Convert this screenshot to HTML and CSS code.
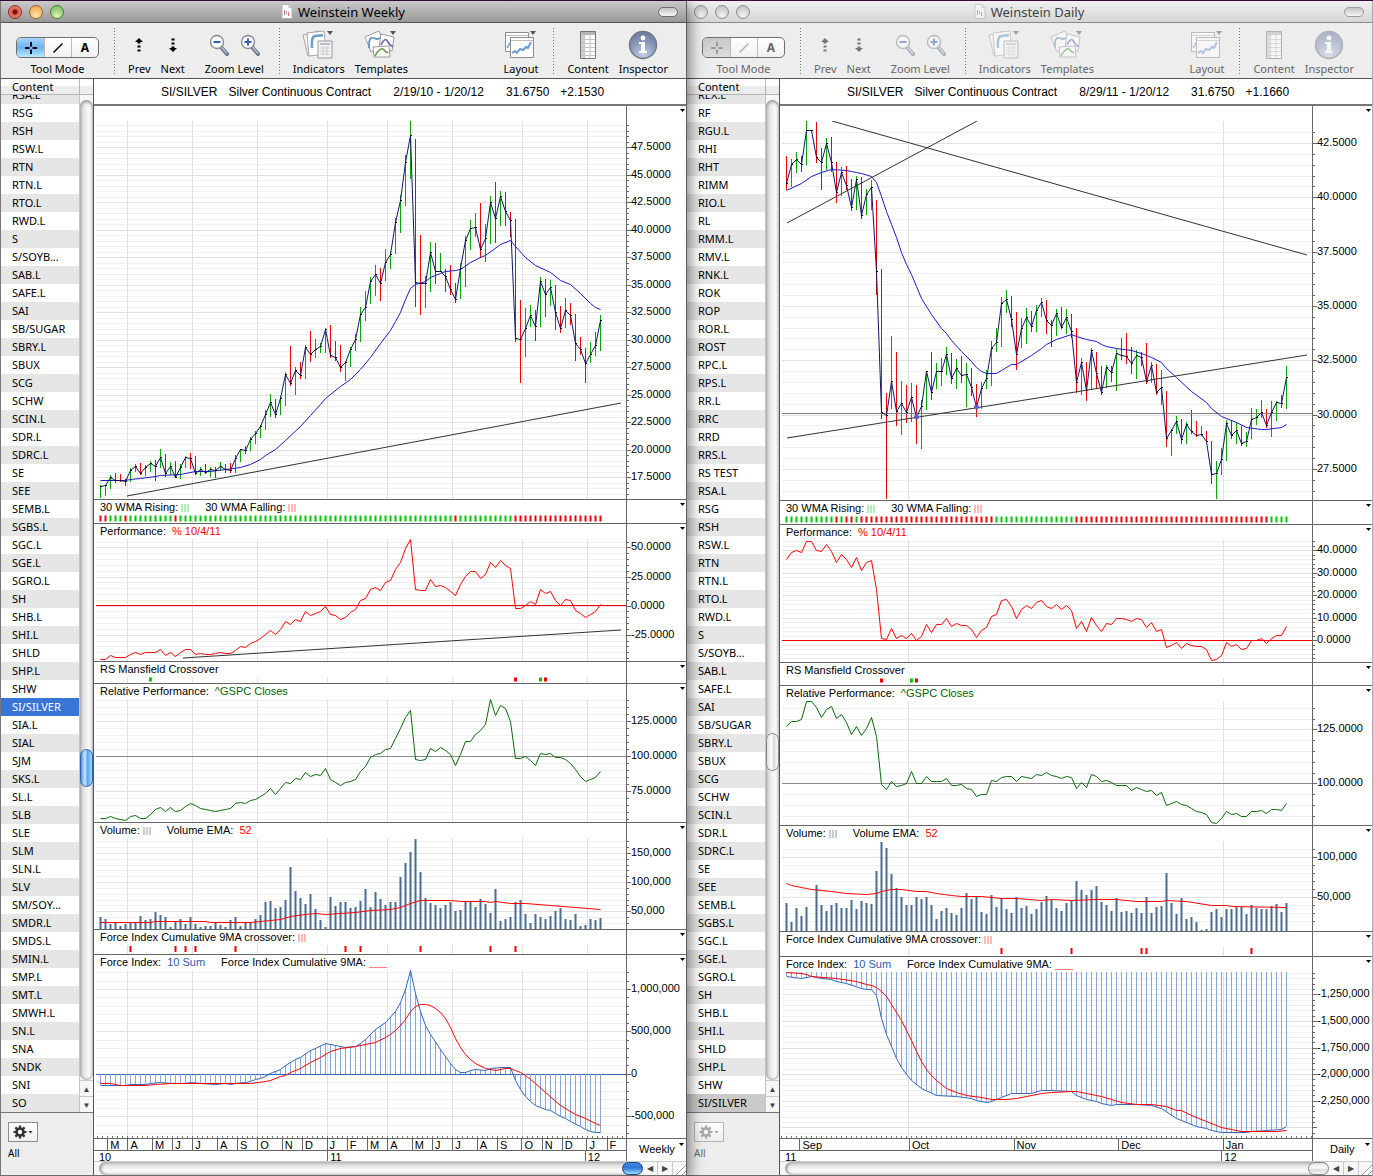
FILE: index.html
```html
<!DOCTYPE html>
<html lang="en">
<head>
  <meta charset="UTF-8">
  <title>Weinstein Charts</title>
  <meta name="viewport" content="width=device-width, initial-scale=1.0"/>
  <link rel="stylesheet" href="styles.css">
</head>
<body>
  <!-- shared icons -->
  <svg class="defs" aria-hidden="true">
    <defs>
      <radialGradient id="info-fill" cx="50%" cy="85%" r="85%">
        <stop offset="0" stop-color="#c3cfe6"/>
        <stop offset="0.6" stop-color="#8796b8"/>
        <stop offset="1" stop-color="#6a789c"/>
      </radialGradient>
    </defs>
    <symbol id="i-doc" viewBox="0 0 12 15">
      <path d="M1 .5h7l3 3v11H1z" fill="#fff" stroke="#b5b5b5"/>
      <path d="M8 .5v3h3" fill="#e4e4e4" stroke="#b5b5b5"/>
      <path d="M3.5 6v5M7.5 8v4" stroke="#e06a7c" stroke-width="1"/>
      <path d="M5.5 7v3" stroke="#8aa3d8"/>
    </symbol>
    <symbol id="i-cross" viewBox="0 0 12 12">
      <path d="M6 0v4.5M6 7.5V12M0 6h4.5M7.5 6H12" stroke="currentColor" stroke-width="2"/>
    </symbol>
    <symbol id="i-line" viewBox="0 0 12 12">
      <path d="M1.5 10.5l9-9" stroke="currentColor" stroke-width="1.5"/>
    </symbol>
    <symbol id="i-prev" viewBox="0 0 10 16">
      <path d="M5 1l4 4H6.5v1.500h-3V5H1z"/>
      <path d="M3.5 8.500h3v2h-3zM3.5 12.500h3v2h-3z"/>
    </symbol>
    <symbol id="i-next" viewBox="0 0 10 16">
      <path d="M5 15l4-4H6.5V9.500h-3V11H1z"/>
      <path d="M3.5 5.500h3v2h-3zM3.5 1.500h3v2h-3z"/>
    </symbol>
    <symbol id="i-zoom-out" viewBox="0 0 20 22">
      <path d="M12 13l6 7" stroke="#68758c" stroke-width="4" stroke-linecap="round"/>
      <path d="M12.5 13l5 6" stroke="#b4c2d8" stroke-width="1.5" stroke-linecap="round"/>
      <circle cx="8" cy="8" r="6.5" fill="#f8fbff" stroke="#858585" stroke-width="1.3"/>
      <path d="M4.5 8h7" stroke="#3b62ac" stroke-width="2"/>
    </symbol>
    <symbol id="i-zoom-in" viewBox="0 0 20 22">
      <path d="M12 13l6 7" stroke="#68758c" stroke-width="4" stroke-linecap="round"/>
      <path d="M12.5 13l5 6" stroke="#b4c2d8" stroke-width="1.5" stroke-linecap="round"/>
      <circle cx="8" cy="8" r="6.5" fill="#f8fbff" stroke="#858585" stroke-width="1.3"/>
      <path d="M4.5 8h7M8 4.5v7" stroke="#3b62ac" stroke-width="2"/>
    </symbol>
    <symbol id="i-indicators" viewBox="0 0 34 30">
      <path d="M1 5l16-4 5 21-16 4z" fill="#f4f4f4" stroke="#a6a6a6"/>
      <path d="M5 3l17-2 2 23-17 2z" fill="#fff" stroke="#a6a6a6"/>
      <path d="M10 18c0-6-1-11 3-12s5 0 8-1" fill="none" stroke="#6b9ccc" stroke-width="2.4"/>
      <path d="M16 11h14v17H16z" fill="#f3f3f3" stroke="#9a9a9a"/>
      <path d="M18 14h10" stroke="#b9bec9" stroke-width="2"/>
      <path d="M18 18h10M18 21h10M18 24h10M21 16v10M25 16v10" stroke="#c8c8c8" stroke-width="0.8"/>
      <path d="M25 1h6l-3 4z" fill="#555"/>
    </symbol>
    <symbol id="i-templates" viewBox="0 0 34 30">
      <path d="M1 7l14-6 6 14-14 7z" fill="#fff" stroke="#9b9b9b"/>
      <path d="M5 18c0-6 0-11 4-10s4 2 7 0" fill="none" stroke="#6590c4" stroke-width="1.800"/>
      <path d="M17 4l13 3-2 14-13-3z" fill="#fff" stroke="#9b9b9b"/>
      <path d="M17 15c3-6 5-7 7-3s3 3 5 5" fill="none" stroke="#8267b4" stroke-width="1.800"/>
      <path d="M9 17l16-1 1 11H10z" fill="#fff" stroke="#9b9b9b"/>
      <path d="M11 26c3-6 7-9 9-6s2 1 4 3" fill="none" stroke="#72a054" stroke-width="1.800"/>
      <path d="M26 1h6l-3 4z" fill="#555"/>
    </symbol>
    <symbol id="i-layout" viewBox="0 0 34 30">
      <path d="M1.500 2.500h23v19h-23z" fill="#fff" stroke="#8d8d8d"/>
      <path d="M2 5.500h22" stroke="#bdbdbd"/>
      <path d="M3 18l3-5 3-3" fill="none" stroke="#7fa7d6" stroke-width="1.600"/>
      <path d="M6.500 7.500h23v20h-23z" fill="#fff" stroke="#8d8d8d"/>
      <path d="M7 10.500h22" stroke="#bdbdbd"/>
      <path d="M8 23l3-2 2 2 3-4 3 1 3-3 2 1 3-6" fill="none" stroke="#6f9bd0" stroke-width="2"/>
      <path d="M26 1h6l-3 4z" fill="#555"/>
    </symbol>
    <symbol id="i-content" viewBox="0 0 16 28">
      <path d="M.5.500h15v27H.5z" fill="#fff" stroke="#777"/>
      <path d="M1 1h14v3H1z" fill="#b5b5b5"/>
      <path d="M1 4h3.500v23H1z" fill="#cfcfcf"/>
      <path d="M4.500 4v23M10 4v23M1 8.500h14M1 12.500h14M1 16.500h14M1 20.500h14M1 24.500h14" stroke="#c4c4c4"/>
    </symbol>
    <symbol id="i-info" viewBox="0 0 30 30">
      <circle cx="15" cy="15" r="13.500" fill="url(#info-fill)" stroke="#727784" stroke-width="1.400"/>
      <circle cx="15" cy="8" r="2.400" fill="#fff"/>
      <path d="M11 12h6v9h2v2h-8v-2h2v-7h-2z" fill="#fff"/>
    </symbol>
    <symbol id="i-gear" viewBox="0 0 14 14">
      <circle cx="7" cy="7" r="3.500" fill="none" stroke="currentColor" stroke-width="2.600"/>
      <path d="M7 .5v3M7 10.500v3M.5 7h3M10.500 7h3M2.400 2.400l2 2M9.600 9.600l2 2M2.400 11.600l2-2M9.600 4.400l2-2" stroke="currentColor" stroke-width="2.200"/>
    </symbol>
  </svg>

  <main class="desktop">
    <section class="window active">
      <header class="titlebar">
        <div class="lights">
          <button class="light red" aria-label="Close"></button>
          <button class="light amber" aria-label="Minimize"></button>
          <button class="light green" aria-label="Zoom"></button>
        </div>
        <h1 class="title"><svg width="12" height="15"><use href="#i-doc"/></svg>Weinstein Weekly</h1>
        <button class="pill" aria-label="Toggle toolbar"></button>
      </header>
      <nav class="toolbar">
        <div class="tool">
          <div class="icons segmented">
            <button class="on" aria-label="Crosshair"><svg width="12" height="12"><use href="#i-cross"/></svg></button>
            <button aria-label="Line"><svg width="12" height="12"><use href="#i-line"/></svg></button>
            <button>A</button>
          </div>
          <span class="label">Tool Mode</span>
        </div>
        <i class="divider"></i>
        <button class="tool"><span class="icons"><svg width="10" height="16"><use href="#i-prev"/></svg></span><span class="label">Prev</span></button>
        <button class="tool"><span class="icons"><svg width="10" height="16"><use href="#i-next"/></svg></span><span class="label">Next</span></button>
        <div class="tool zoom">
          <div class="icons">
            <button aria-label="Zoom out"><svg width="20" height="22"><use href="#i-zoom-out"/></svg></button>
            <button aria-label="Zoom in"><svg width="20" height="22"><use href="#i-zoom-in"/></svg></button>
          </div>
          <span class="label">Zoom Level</span>
        </div>
        <i class="divider"></i>
        <button class="tool"><span class="icons"><svg width="34" height="30"><use href="#i-indicators"/></svg></span><span class="label">Indicators</span></button>
        <button class="tool"><span class="icons"><svg width="34" height="30"><use href="#i-templates"/></svg></span><span class="label">Templates</span></button>
        <span class="spacer"></span>
        <button class="tool"><span class="icons"><svg width="34" height="30"><use href="#i-layout"/></svg></span><span class="label">Layout</span></button>
        <i class="divider"></i>
        <button class="tool"><span class="icons"><svg width="16" height="28"><use href="#i-content"/></svg></span><span class="label">Content</span></button>
        <button class="tool"><span class="icons"><svg width="30" height="30"><use href="#i-info"/></svg></span><span class="label">Inspector</span></button>
      </nav>
      <div class="content">
        <aside class="sidebar">
          <h2 class="list-head">Content</h2>
          <div class="list-wrap">
            <ul class="symbols" id="weekly-symbols"></ul>
            <div class="vscroll">
              <div class="vtrack"><div class="vthumb"></div></div>
              <button aria-label="Scroll up">▲</button>
              <button aria-label="Scroll down">▼</button>
            </div>
          </div>
          <footer class="list-foot">
            <button class="gear" aria-label="Actions"><svg width="14" height="14"><use href="#i-gear"/></svg><i class="caret"></i></button>
            <span>All</span>
          </footer>
        </aside>
        <div class="chart">
          <div class="quote">
            <span>SI/SILVER</span><span class="name">Silver Continuous Contract</span><span class="range">2/19/10 - 1/20/12</span><span>31.6750</span><span>+2.1530</span>
          </div>
          <div class="panes" id="weekly-panes"></div>
          <div class="timeline">
            <div class="scale">
              <div class="months" id="weekly-months"></div>
              <div class="years" id="weekly-years"></div>
            </div>
            <button class="period">Weekly<i class="caret"></i></button>
          </div>
          <div class="hscroll">
            <div class="htrack"><div class="hthumb"></div></div>
            <button aria-label="Scroll left">◀</button>
            <button aria-label="Scroll right">▶</button>
            <i class="grip"></i>
          </div>
        </div>
      </div>
    </section>

    <section class="window inactive">
      <header class="titlebar">
        <div class="lights">
          <button class="light" aria-label="Close"></button>
          <button class="light" aria-label="Minimize"></button>
          <button class="light" aria-label="Zoom"></button>
        </div>
        <h1 class="title"><svg width="12" height="15"><use href="#i-doc"/></svg>Weinstein Daily</h1>
        <button class="pill" aria-label="Toggle toolbar"></button>
      </header>
      <nav class="toolbar">
        <div class="tool">
          <div class="icons segmented">
            <button class="on" aria-label="Crosshair"><svg width="12" height="12"><use href="#i-cross"/></svg></button>
            <button aria-label="Line"><svg width="12" height="12"><use href="#i-line"/></svg></button>
            <button>A</button>
          </div>
          <span class="label">Tool Mode</span>
        </div>
        <i class="divider"></i>
        <button class="tool"><span class="icons"><svg width="10" height="16"><use href="#i-prev"/></svg></span><span class="label">Prev</span></button>
        <button class="tool"><span class="icons"><svg width="10" height="16"><use href="#i-next"/></svg></span><span class="label">Next</span></button>
        <div class="tool zoom">
          <div class="icons">
            <button aria-label="Zoom out"><svg width="20" height="22"><use href="#i-zoom-out"/></svg></button>
            <button aria-label="Zoom in"><svg width="20" height="22"><use href="#i-zoom-in"/></svg></button>
          </div>
          <span class="label">Zoom Level</span>
        </div>
        <i class="divider"></i>
        <button class="tool"><span class="icons"><svg width="34" height="30"><use href="#i-indicators"/></svg></span><span class="label">Indicators</span></button>
        <button class="tool"><span class="icons"><svg width="34" height="30"><use href="#i-templates"/></svg></span><span class="label">Templates</span></button>
        <span class="spacer"></span>
        <button class="tool"><span class="icons"><svg width="34" height="30"><use href="#i-layout"/></svg></span><span class="label">Layout</span></button>
        <i class="divider"></i>
        <button class="tool"><span class="icons"><svg width="16" height="28"><use href="#i-content"/></svg></span><span class="label">Content</span></button>
        <button class="tool"><span class="icons"><svg width="30" height="30"><use href="#i-info"/></svg></span><span class="label">Inspector</span></button>
      </nav>
      <div class="content">
        <aside class="sidebar">
          <h2 class="list-head">Content</h2>
          <div class="list-wrap">
            <ul class="symbols" id="daily-symbols"></ul>
            <div class="vscroll">
              <div class="vtrack"><div class="vthumb"></div></div>
              <button aria-label="Scroll up">▲</button>
              <button aria-label="Scroll down">▼</button>
            </div>
          </div>
          <footer class="list-foot">
            <button class="gear" aria-label="Actions"><svg width="14" height="14"><use href="#i-gear"/></svg><i class="caret"></i></button>
            <span>All</span>
          </footer>
        </aside>
        <div class="chart">
          <div class="quote">
            <span>SI/SILVER</span><span class="name">Silver Continuous Contract</span><span class="range">8/29/11 - 1/20/12</span><span>31.6750</span><span>+1.1660</span>
          </div>
          <div class="panes" id="daily-panes"></div>
          <div class="timeline">
            <div class="scale">
              <div class="months" id="daily-months"></div>
              <div class="years" id="daily-years"></div>
            </div>
            <button class="period">Daily<i class="caret"></i></button>
          </div>
          <div class="hscroll">
            <div class="htrack"><div class="hthumb"></div></div>
            <button aria-label="Scroll left">◀</button>
            <button aria-label="Scroll right">▶</button>
            <i class="grip"></i>
          </div>
        </div>
      </div>
    </section>
  </main>
  <script src="charts.js"></script>
</body>
</html>
```

FILE: styles.css
```css
* {
  box-sizing: border-box;
}

body {
  margin: 0;
  padding-top: 1px;
  background: #3b0a3e;
  font-family: "Noto Sans", "Open Sans", sans-serif;
  font-size: 11px;
  color: #000;
}

h1, h2, h3, ul {
  margin: 0;
  padding: 0;
  font-weight: normal;
}

button {
  margin: 0;
  padding: 0;
  border: none;
  background: none;
  font: inherit;
  color: inherit;
}

.defs {
  position: absolute;
  width: 0;
  height: 0;
}

.desktop {
  display: grid;
  grid-template-columns: 687fr 686fr;
}

.window {
  display: flex;
  flex-direction: column;
  min-width: 0;
  border-right: 1px solid #5e5e5e;
  border-bottom: 1px solid #6a6a6a;
  background: #ededed;
}

.window.active {
  position: relative;
  z-index: 1;
  border-left: 1px solid #777;
  box-shadow: 2px 4px 14px rgba(0,0,0,0.55);
}

.window.inactive {
  border-right-color: #aaa;
}

/* Title bar */
.titlebar {
  display: grid;
  grid-template-columns: 1fr auto 1fr;
  align-items: center;
  height: 22px;
  padding: 0 8px 0 7px;
  border-bottom: 1px solid #555;
  background: linear-gradient(#cacaca, #989898);
}

.inactive .titlebar {
  border-bottom-color: #8b8b8b;
  background: linear-gradient(#efefef, #d6d6d6);
}

.lights {
  display: flex;
  gap: 7px;
}

.light {
  width: 14px;
  height: 14px;
  border: 1px solid #8f8f8f;
  border-radius: 50%;
  background: radial-gradient(circle at 50% 80%, #f2f2f2, #bcbcbc);
}

.light.red {
  border-color: #8c2a22;
  background: radial-gradient(circle at 50% 50%, #7a1010 0 2px, #e2584e 3px, #f29a90);
}

.light.amber {
  border-color: #a2672a;
  background: radial-gradient(circle at 50% 85%, #ffe9a8, #ec9a45);
}

.light.green {
  border-color: #4d7f3a;
  background: radial-gradient(circle at 50% 85%, #ddf7b4, #6cb558);
}

.title {
  display: flex;
  align-items: center;
  gap: 5px;
  font-size: 13px;
  line-height: 20px;
}

.inactive .title {
  color: #444;
}

.inactive .title svg {
  opacity: 0.6;
}

.pill {
  justify-self: end;
  width: 20px;
  height: 10px;
  border: 1px solid #6d6d6d;
  border-radius: 5px;
  background: linear-gradient(#c4c4c4, #f5f5f5);
}

.inactive .pill {
  border-color: #9b9b9b;
}

/* Toolbar */
.toolbar {
  display: flex;
  align-items: flex-start;
  height: 56px;
  padding: 5px 13px 0 10px;
  border-bottom: 1px solid #555;
  background: #ededed;
}

.tool {
  display: flex;
  flex-direction: column;
  align-items: center;
  padding: 0 5px;
}

.icons {
  display: flex;
  align-items: center;
  justify-content: center;
  gap: 11px;
  height: 33px;
}

.icons svg {
  display: block;
}

.label {
  line-height: 16px;
  white-space: nowrap;
}

.tool.zoom {
  margin-left: 10px;
}

.spacer {
  flex: 1;
}

.divider {
  width: 1px;
  height: 48px;
  margin: 0 8px 0 10px;
  background: repeating-linear-gradient(#777 0 1px, transparent 1px 3px);
}

.segmented {
  gap: 0;
  height: 21px;
  margin: 9px 0 3px;
  border: 1px solid #6f6f6f;
  border-radius: 5px;
  background: linear-gradient(#fff, #f1f1f1);
  overflow: hidden;
}

.segmented button {
  display: flex;
  align-items: center;
  justify-content: center;
  width: 27px;
  height: 19px;
  border-left: 1px solid #bbb;
  font-size: 12px;
  font-weight: bold;
}

.segmented .on {
  border-left: none;
  background: linear-gradient(#a8d2f7, #6db4f1 50%, #b8eafd);
}

.inactive .segmented .on {
  background: linear-gradient(#c8c8c8, #dcdcdc);
}

.inactive .icons svg {
  opacity: 0.5;
}

.inactive .label,
.inactive .segmented {
  color: #666;
}

/* Sidebar */
.content {
  display: flex;
  flex: 1;
}

.sidebar {
  display: flex;
  flex-direction: column;
  flex: none;
  width: 93px;
  border-right: 1px solid #555;
}

.list-head {
  flex: none;
  height: 16px;
  padding-left: 11px;
  border-bottom: 1px solid #b5b5b5;
  background: linear-gradient(90deg, transparent 78px, #b5b5b5 78px 79px, transparent 79px), linear-gradient(#fdfdfd 50%, #ececec 50%);
  font-size: 11px;
  line-height: 15px;
}

.list-wrap {
  display: flex;
  flex: 1 1 0;
  height: 0;
  min-height: 0;
  overflow: hidden;
}

.symbols {
  display: flex;
  flex-direction: column;
  justify-content: flex-end;
  flex: 1;
  overflow: hidden;
  background: #fff;
  list-style: none;
}

.symbols li {
  flex: none;
  height: 18px;
  padding-left: 11px;
  line-height: 18px;
}

.symbols li:nth-child(odd) {
  background: #e6e6e6;
}

.symbols li.selected {
  background: #3875d7;
  color: #fff;
}

.inactive .symbols li.selected {
  background: #cacaca;
  color: #000;
}

.vscroll {
  display: flex;
  flex-direction: column;
  width: 14px;
  border-left: 1px solid #c4c4c4;
  background: #f6f6f6;
}

.vtrack {
  flex: 1;
  margin-top: 5px;
  padding-top: 649px;
  border-radius: 7px;
  background: linear-gradient(90deg, #c6c6c6, #e9e9e9 35%, #fafafa 70%, #e6e6e6);
  box-shadow: inset 0 2px 3px #999, inset 0 -1px 2px #aaa;
}

.inactive .vtrack {
  padding-top: 633px;
}

.vthumb {
  height: 38px;
  border: 1px solid #2c5fb0;
  border-radius: 7px;
  background: linear-gradient(90deg, #4d92e4, #cbe7ff 35%, #5ba4ee 60%, #9bdcff);
}

.inactive .vthumb,
.inactive .hthumb {
  border-color: #868686;
  background: linear-gradient(90deg, #ddd, #fff 40%, #ddd 60%, #f6f6f6);
}

.vscroll button {
  height: 16px;
  border-top: 1px solid #c9c9c9;
  font-size: 8px;
  line-height: 15px;
  color: #444;
}

.list-foot {
  display: flex;
  flex-direction: column;
  flex: none;
  align-items: flex-start;
  gap: 4px;
  height: 63px;
  padding: 9px 7px 0;
  border-top: 1px solid #777;
  font-size: 10px;
  line-height: 14px;
}

.gear {
  display: flex;
  align-items: center;
  justify-content: center;
  gap: 1px;
  width: 30px;
  height: 20px;
  border: 1px solid #8c8c8c;
  background: linear-gradient(#fff, #eee);
  color: #333;
}

.inactive .list-foot {
  color: #666;
}

.inactive .gear {
  border-color: #b5b5b5;
  color: #aaa;
}

.caret {
  width: 5px;
  height: 3px;
  background: currentColor;
  clip-path: polygon(0 0, 100% 0, 50% 100%);
}

/* Chart */
.chart {
  flex: 1;
  min-width: 0;
  background: #fff;
  font-family: "Liberation Sans", Arial, sans-serif;
}

.quote {
  display: flex;
  gap: 11px;
  height: 27px;
  padding-left: 67px;
  border-bottom: 2px solid #777;
  font-size: 12px;
  line-height: 26px;
  white-space: nowrap;
}

.quote .range {
  margin: 0 11px;
}

.pane {
  display: flex;
  border-bottom: 1px solid #666;
}

.pane-main {
  flex: 1;
  min-width: 0;
}

.pane-title {
  display: flex;
  gap: 16px;
  height: 15px;
  padding-left: 6px;
  font-size: 11px;
  line-height: 15px;
  white-space: nowrap;
}

.pane-title span {
  display: flex;
  align-items: center;
  gap: 3px;
}

.pane-title b {
  margin-left: 3px;
  font-weight: normal;
}

.pane-title .red { color: #f00; }
.pane-title .green { color: #006400; }
.pane-title .blue { color: #2a5db0; }

.swatch {
  width: 8px;
  height: 8px;
  background: repeating-linear-gradient(90deg, currentColor 0 2px, transparent 2px 3px);
}

.swatch.up { color: #b2efb2; }
.swatch.down { color: #ffb9b9; }
.swatch.vol { color: #c3ced9; }

.swatch.rule {
  width: 18px;
  height: 1px;
  margin-top: 9px;
  background: #ff8080;
}

.plot {
  display: block;
  width: 100%;
}

.plot path,
.plot line,
.axis line {
  fill: none;
  vector-effect: non-scaling-stroke;
}

.crisp {
  shape-rendering: crispEdges;
}

.minor { stroke: #efefef; }
.major { stroke: #e1e1e1; }
.trend { stroke: #333; }

.axis {
  flex: none;
  display: block;
  width: 60px;
  border-left: 1px solid #666;
}

.axis text {
  font-size: 11px;
}

.axis line {
  stroke: #666;
}

.timeline {
  display: flex;
  height: 22px;
}

.scale {
  flex: 1;
  min-width: 0;
}

.months,
.years {
  display: flex;
  font-size: 11px;
}

.months {
  height: 12px;
  border-bottom: 1px solid #666;
  line-height: 13px;
}

.months span,
.years span {
  flex: 1 1 0;
  min-width: 0;
  padding-left: 2px;
  border-left: 1px solid #666;
}

.months span:first-child,
.years span:first-child {
  border-left: none;
}

.years span:first-child {
  padding-left: 5px;
}

.years {
  height: 10px;
  line-height: 12px;
}

.period {
  display: flex;
  justify-content: space-between;
  width: 60px;
  padding: 4px 2px 0 12px;
  border-left: 1px solid #666;
  font-size: 11px;
  line-height: 13px;
}

.inactive .period {
  padding-left: 17px;
}

.hscroll {
  display: flex;
  height: 14px;
  border-top: 1px solid #ccc;
  background: #f6f6f6;
}

.htrack {
  flex: 1;
  display: flex;
  justify-content: flex-end;
  margin-left: 5px;
  border-radius: 7px;
  background: linear-gradient(#c6c6c6, #e9e9e9 35%, #fafafa 70%, #e6e6e6);
  box-shadow: inset 2px 0 3px #999;
}

.hthumb {
  width: 21px;
  border: 1px solid #1d3f86;
  border-radius: 7px;
  background: linear-gradient(#4387dd, #2f78d4 45%, #9bdcff);
}

.inactive .hthumb {
  background: linear-gradient(#ddd, #fff 40%, #ddd 60%, #f6f6f6);
}

.hscroll button {
  width: 15px;
  border-right: 1px solid #c9c9c9;
  font-size: 8px;
  line-height: 12px;
  color: #444;
}

.grip {
  width: 13px;
  background: repeating-linear-gradient(135deg, #fff 0 3px, #999 3px 4px);
  clip-path: polygon(100% 0, 100% 100%, 0 100%);
}
```

FILE: charts.js
```js
const W = 532;
const TOP = 15;
const GREEN = "#00a800";
const RED = "#f00000";

const nums = s => s.trim().split(/\s+/).map(Number);
const x = i => 6.5 + 5 * i;
const snap = y => Math.round(y) + 0.5;

// "0:374 5:375" -> path through those bars only
function sparse(s) {
  const pts = s.trim().split(/\s+/).map(p => p.split(":").map(Number));
  return "M" + pts.map(([i, y]) => x(i) + " " + (y + 0.5)).join("L");
}

function dense(ys) {
  return "M" + ys.map((y, i) => x(i) + " " + (y + 0.5)).join("L");
}

// value of a sparse series at every bar
function fill(s) {
  const pts = s.trim().split(/\s+/).map(p => p.split(":").map(Number));
  const out = [];
  for (let k = 0; k < pts.length - 1; k++) {
    const [a, ya] = pts[k];
    const [b, yb] = pts[k + 1];
    for (let i = a; i < b; i++) out.push(ya + (yb - ya) * (i - a) / (b - a));
  }
  out.push(pts[pts.length - 1][1]);
  return out;
}

function line(x1, y1, x2, y2, cls, stroke) {
  return `<line x1="${x1}" y1="${y1}" x2="${x2}" y2="${y2}" class="${cls || ""}"${stroke ? ` stroke="${stroke}"` : ""}/>`;
}

function path(d, stroke, width) {
  return `<path d="${d}" stroke="${stroke}" stroke-width="${width || 1}" stroke-linejoin="round"/>`;
}

function drawPane(p, verticals) {
  const h = p.h - 1;
  let plot = "";
  let axis = `<path d="M53 3h5l-2.5 3z"/>`;

  if (p.grid) {
    const g = p.grid;
    const step = g.step / 5;
    for (let k = -Math.floor((g.y - 16) / step); g.y + k * step < h - 2; k++) {
      const y = snap(g.y + k * step);
      const major = k % 5 === 0;
      plot += line(2, y, W, y, "crisp " + (major ? "major" : "minor"));
      axis += line(0, y, major ? 4 : 2, y, "crisp");
    }
    g.labels.forEach((t, k) => {
      axis += `<text x="4" y="${Math.round(g.y + k * g.step) + 3}">${t}</text>`;
    });
  }
  verticals.forEach(v => plot += line(v + 0.5, TOP, v + 0.5, h, "crisp major"));

  if (p.bars) {
    p.bars.trim().split(/\s+/).forEach((b, i) => {
      const [hi, lo] = b.slice(1).split("-");
      plot += line(x(i), hi, x(i), lo, "crisp", b[0] === "g" ? GREEN : RED);
    });
  }
  if (p.level) plot += line(2, p.level[0] + 0.5, W, p.level[0] + 0.5, "crisp", p.level[1]);
  if (p.volume) {
    nums(p.volume).forEach((y, i) => {
      plot += `<rect x="${x(i) - 1}" y="${y}" width="2" height="${Math.max(0, h - y)}" fill="#4a6d94"/>`;
    });
  }
  if (p.stems) {
    fill(p.stems).forEach((y, i) => {
      plot += line(x(i), p.base, x(i), y, "crisp", "#86a6dc");
    });
    plot += path(sparse(p.stems), "#3366b8");
  }
  if (p.ma) plot += path(sparse(p.ma[0]), p.ma[1], 1);
  if (p.series) plot += path(dense(nums(p.series[0])), p.series[1], 1);
  if (p.closes) {
    nums(p.series[0]).forEach((y, i) => {
      plot += `<rect x="${x(i) - 0.5}" y="${y}" width="2" height="1"/>`;
    });
  }
  (p.trends || []).forEach(t => plot += line(t[0], t[1], t[2], t[3], "trend"));
  (p.dots || []).forEach(d => plot += `<circle cx="${x(d[0])}" cy="${d[1]}" r="2.5" fill="#5c5cc4"/>`);
  if (p.strip) {
    p.strip.split("").forEach((c, i) => {
      plot += `<rect x="${x(i) - 1}" y="15.5" width="2" height="6" fill="${c === "g" ? "#00c800" : RED}"/>`;
    });
  }
  (p.marks || []).forEach(([i, c]) => {
    plot += `<rect x="${x(i) - (p.wide ? 1.5 : 1)}" y="${p.wide ? 15.5 : 16}" width="${p.wide ? 3 : 2}" height="${p.wide ? 4 : 6}" fill="${c === "g" ? "#00c800" : RED}"/>`;
  });
  if (p.ticks) {
    for (let t = p.ticks; t < W; t += 5) plot += line(t, h - 2, t, h, "crisp", "#777");
  }

  return `<section class="pane" style="height:${p.h}px">
    <div class="pane-main">
      <h3 class="pane-title">${p.title || ""}</h3>
      <svg class="plot" height="${h - TOP}" viewBox="0 ${TOP} ${W} ${h - TOP}" preserveAspectRatio="none">${plot}</svg>
    </div>
    <svg class="axis" height="${h}">${axis}</svg>
  </section>`;
}

// cells between separators, sized in proportion to the time they cover
function cells(stops, labels) {
  let prev = 0;
  return stops.concat(W).map((s, i) => {
    const w = s - prev;
    prev = s;
    return `<span style="flex-grow:${w}">${labels[i]}</span>`;
  }).join("");
}

const titles = {
  wma: `<span>30 WMA Rising:<i class="swatch up"></i></span><span>30 WMA Falling:<i class="swatch down"></i></span>`,
  perf: `<span>Performance:<b class="red">% 10/4/11</b></span>`,
  rs: `<span>RS Mansfield Crossover</span>`,
  rel: `<span>Relative Performance:<b class="green">^GSPC Closes</b></span>`,
  vol: `<span>Volume:<i class="swatch vol"></i></span><span>Volume EMA:<b class="red">52</b></span>`,
  cross: `<span>Force Index Cumulative 9MA crossover:<i class="swatch down"></i></span>`,
  force: `<span>Force Index:<b class="blue">10 Sum</b></span><span>Force Index Cumulative 9MA:<i class="swatch rule"></i></span>`
};

const weekly = [
  {
    h: 394,
    grid: { y: 41, step: 27.5, labels: ["47.5000", "45.0000", "42.5000", "40.0000", "37.5000", "35.0000", "32.5000", "30.0000", "27.5000", "25.0000", "22.5000", "20.0000", "17.5000"] },
    bars: `g379-392 g379-390 g369-383 r367-377 r368-376 r373-380 g362-376 g358-366 r357-369 g359-370
      g355-366 r354-375 g343-362 r348-371 g356-369 r355-371 g358-373 g350-362 r347-363 r350-369
      g361-370 r358-368 g361-371 r361-372 g356-365 r358-367 r357-367 g349-367 g343-356 r340-348
      g331-345 g325-338 g319-332 g304-324 g288-311 r293-312 g290-309 g266-300 r240-280 g261-289
      r256-273 g239-273 r225-256 g233-252 g237-247 g222-247 r219-252 r235-255 r239-266 g255-275
      g241-261 g228-245 g201-236 g185-215 g171-198 g159-190 r162-195 g143-175 g145-163 g112-148
      g89-127 g49-100 g15-73 r33-201 r129-209 g170-202 g136-186 r137-178 g147-166 r163-186
      r159-189 r177-197 g157-193 g130-181 g114-144 g107-131 r97-152 g118-156 g90-138 r76-137
      g85-120 r86-120 r106-131 r113-236 r194-277 g202-251 g199-221 r204-235 g171-221 r173-211
      g174-200 r179-224 r200-227 g192-222 r197-219 r208-255 r231-249 r242-277 g236-257 g226-250
      g209-245`,
    series: [`380 379 371 374 374 375 364 360 367 361 357 360 351 367 360 371 361 351 352 367
      363 366 363 364 360 363 364 352 343 344 333 327 320 308 296 308 292 268 277 264
      269 241 248 243 240 223 249 251 261 256 243 233 208 201 175 168 177 156 148 116
      94 56 29 176 177 177 146 165 165 170 183 193 162 134 122 121 143 132 96 112
      90 105 114 232 233 222 209 220 175 188 181 206 222 204 209 237 243 257 248 239 214`, "#15156e"],
    closes: true,
    ma: [`0:374 5:374 6:373 8:372 11:370 12:369 16:368 19:365 22:365 25:363 28:361 30:358 32:353 33:349 35:343 37:334 40:320 42:309 44:298 45:292
      48:280 50:273 52:263 54:251 56:237 58:224 59:215 60:206 61:193 62:182 63:178 65:175 66:171 68:167 69:165 71:164 72:163 74:156 76:151 77:149
      80:138 82:134 83:140 85:151 87:159 90:166 92:174 94:178 96:187 98:197 99:201 100:203`, "#1a1ac8"],
    trends: [[33, 390, 527, 297]]
  },
  { h: 24, title: titles.wma, strip: "rrgggrgggggggggr" + "g".repeat(55) + "r" + "g".repeat(11) + "r".repeat(18) },
  {
    h: 138, title: titles.perf,
    grid: { y: 23.4, step: 29.1, labels: ["50.0000", "25.0000", "0.0000", "-25.0000"] },
    level: [81, RED],
    series: [`135 135 131 133 133 133 130 128 130 128 128 128 125 131 128 132 128 125 125 130
      129 130 130 129 128 129 129 126 122 123 119 117 114 110 106 110 105 97 100 95
      97 87 91 89 87 82 90 91 95 93 88 85 76 74 65 63 66 58 56 45
      38 24 15 65 66 66 55 62 61 63 67 71 60 52 47 47 54 50 38 43
      36 41 44 84 84 81 77 80 65 69 67 76 81 75 76 86 89 93 90 87 80`, "#ff0000"],
    trends: [[89, 134, 527, 106]]
  },
  { h: 22, title: titles.rs, wide: true, marks: [[10, "g"], [83, "r"], [88, "g"], [89, "r"]] },
  {
    h: 139, title: titles.rel,
    grid: { y: 37, step: 35, labels: ["125.0000", "100.0000", "75.0000"] },
    level: [72, "#8a8a8a"],
    series: [`134 134 132 134 135 136 132 131 134 134 130 125 123 127 123 127 126 122 119 121
      124 125 126 127 126 125 124 119 118 119 116 115 112 109 104 110 104 98 99 94
      95 88 92 90 91 84 95 98 101 98 97 95 87 82 73 70 69 65 64 54
      44 33 26 75 76 75 64 67 63 66 70 81 70 57 57 50 46 40 15 31
      21 24 37 74 74 72 76 81 69 70 69 73 73 75 79 85 92 97 95 93 87`, "#0a6a0a"]
  },
  {
    h: 107, title: titles.vol,
    grid: { y: 30, step: 29.1, labels: ["150,000", "100,000", "50,000"] },
    volume: `94 96 101 99 103 101 100 100 93 97 96 89 92 94 104 99 96 101 94 101
      104 103 103 99 102 104 97 94 103 100 99 96 92 79 78 85 84 77 44 68
      75 81 71 86 97 104 74 83 79 79 85 84 78 66 84 69 76 82 79 79
      54 40 29 16 49 75 80 82 85 82 79 88 87 78 78 84 76 81 90 66
      98 96 94 79 77 91 100 91 94 96 93 88 85 96 97 91 103 102 96 97 95`,
    ma: ["0:99 10:99 11:98 21:98 22:99 30:99 32:98 36:96 38:93 41:91 43:90 45:91 48:90 51:89 54:87 58:86 60:84 62:80 64:77 70:77 72:78 77:78 78:79 79:78 82:80 85:80 90:82 95:84 100:86", "#ff0000"]
  },
  { h: 25, title: titles.cross, marks: [6, 15, 17, 19, 27, 49, 52, 64, 78, 83].map(i => [i, "r"]) },
  {
    h: 184, title: titles.force, ticks: 3.5,
    grid: { y: 34, step: 42.4, labels: ["1,000,000", "500,000", "0", "-500,000"] },
    level: [119, "#3366b8"], base: 119,
    stems: `0:130 5:130 6:129 9:129 10:128 12:127 14:128 17:128 18:127 20:128 23:129 25:128 26:129 27:128 29:127 30:126 31:124 32:123 33:121 34:118
      36:114 37:110 39:104 40:102 42:95 43:93 45:88 47:90 49:92 51:91 52:88 53:84 55:74 57:67 59:56 60:47 61:34 62:15 63:38 64:56
      65:70 66:79 68:94 70:108 71:114 72:117 73:117 74:115 75:114 77:115 78:113 80:112 82:112 83:125 84:134 85:141 86:146 87:150 88:152 89:154
      90:155 91:158 92:161 93:163 94:166 96:171 97:174 98:176 99:177 100:177`,
    ma: [`0:128 2:128 3:129 4:130 9:130 11:129 14:128 30:128 33:126 34:125 36:121 37:120 38:117 40:113 42:107 44:102 45:99 46:96 48:93 51:91
      53:89 55:87 57:82 58:79 59:75 60:70 61:64 62:56 63:51 64:49 65:49 66:50 67:53 68:57 69:63 70:72 71:83 72:92 73:99 74:104
      75:108 77:113 79:115 81:113 82:113 83:115 84:117 85:120 86:124 87:128 89:137 92:150 95:159 97:163 99:168 100:170`, "#ff0000"]
  }
];

const daily = [
  {
    h: 395,
    grid: { y: 37, step: 54.3, labels: ["42.5000", "40.0000", "37.5000", "35.0000", "32.5000", "30.0000", "27.5000"] },
    level: [307, "#808080"],
    bars: `r50-84 g53-81 g46-67 r50-66 g15-59 g24-24 r16-57 r42-84 g32-64 r31-66
      r56-97 g61-90 r60-84 r73-105 g70-104 r71-113 g83-109 g74-104 r94-189 r163-313
      r287-393 g230-303 r246-320 g275-329 r279-317 g277-316 r279-338 g294-343 g265-304 r246-294
      g257-283 g252-280 g241-269 r247-278 g253-283 r250-277 g257-301 r262-290 r278-311 g276-303
      g264-283 g235-280 g222-246 g191-241 g184-207 r190-221 r206-264 g212-242 g202-238 r205-226
      g199-226 g192-211 r194-228 r214-241 g203-230 r201-223 g203-228 r208-232 r222-287 g252-289
      r256-295 g242-284 r246-283 r260-289 g259-282 r260-276 g243-285 r232-254 r227-258 r241-268
      g244-273 r246-260 r237-278 g256-277 r258-289 g264-299 r285-341 g323-350 g310-328 r313-338
      g316-338 r304-328 r315-331 g320-330 r325-336 r335-378 g355-393 g342-369 g314-355 r314-333
      g316-338 r320-340 g326-341 g302-333 g303-319 g294-312 r303-322 g295-331 g295-315 r289-302
      g260-303`,
    series: [`77 58 53 58 24 24 51 56 37 56 86 66 79 101 73 109 88 81 165 306
      309 275 305 297 306 291 311 300 265 286 265 265 248 272 262 269 268 281 301 282
      272 242 236 197 193 213 248 222 211 220 204 196 214 219 207 221 211 225 276 256
      284 244 267 286 261 266 247 249 250 257 249 251 275 259 286 281 332 324 315 333
      318 325 329 328 335 368 367 353 317 329 324 337 335 313 311 306 319 306 296 297 271`, "#15156e"],
    closes: true,
    ma: [`0:84 3:77 5:70 7:66 9:63 12:64 13:65 14:66 15:67 17:70 18:76 19:90 20:105 21:118 22:131 23:146 24:158 25:168 26:180 27:192
      28:200 29:208 31:222 32:227 33:234 35:245 37:255 38:261 39:265 40:267 42:267 43:264 45:258 46:258 49:249 51:242 52:238 54:233 57:228 58:230
      60:233 62:235 63:238 64:240 66:242 69:244 71:247 72:249 73:251 75:256 76:262 78:271 81:285 84:296 85:302 87:310 90:316 92:321 95:323 96:323
      99:321 100:318`, "#1a1ac8"],
    trends: [[52, 15, 527, 149], [7, 117, 197, 15], [7, 332, 527, 249]],
    dots: [[26, 311], [38, 301]]
  },
  { h: 24, title: titles.wma, strip: "g".repeat(10) + "rgrrg" + "r".repeat(27) + "g".repeat(16) + "r".repeat(39) + "gggg" },
  {
    h: 138, title: titles.perf,
    grid: { y: 25.3, step: 22.5, labels: ["40.0000", "30.0000", "20.0000", "10.0000", "0.0000"] },
    level: [115, RED],
    series: [`34 27 25 27 16 16 25 26 19 26 37 29 34 42 32 45 37 35 64 113
      114 103 113 110 113 108 115 111 99 107 99 99 93 101 98 100 100 104 112 105
      102 91 89 75 74 81 93 84 80 83 77 75 81 83 79 84 80 85 103 96
      106 92 100 106 98 99 93 93 94 96 93 94 102 97 106 104 122 120 117 123
      118 120 121 121 124 135 134 130 117 121 119 124 123 115 115 113 118 113 110 110 101`, "#ff0000"]
  },
  { h: 23, title: titles.rs, wide: true, marks: [[19, "r"], [25, "g"], [26, "r"]] },
  {
    h: 140, title: titles.rel,
    grid: { y: 43.3, step: 54, labels: ["125.0000", "100.0000"] },
    level: [97, "#8a8a8a"],
    series: [`40 35 35 33 15 15 21 31 23 20 32 28 36 48 40 49 42 31 50 98
      103 95 100 99 97 85 97 97 90 95 95 95 92 99 99 98 102 103 110 108
      108 94 95 91 90 90 95 90 91 92 88 89 86 89 90 92 90 91 102 96
      101 88 90 95 94 96 99 99 99 104 101 103 105 104 109 106 119 117 115 118
      119 122 125 126 128 136 137 132 125 128 127 130 130 125 125 124 127 123 123 124 117`, "#0a6a0a"]
  },
  {
    h: 106, title: titles.vol,
    grid: { y: 31.3, step: 40, labels: ["100,000", "50,000"] },
    volume: `77 96 82 90 81 105 59 79 85 79 77 82 82 74 83 75 77 78 45 16
      22 48 62 71 79 79 71 73 71 79 93 85 82 87 89 82 67 73 70 86
      88 69 81 72 83 87 71 82 80 88 83 76 70 74 82 85 77 74 55 64
      69 64 60 76 79 85 72 86 85 87 82 87 71 87 81 80 47 77 88 72
      93 91 96 104 103 86 83 91 83 83 81 81 88 79 82 83 83 80 78 86 77`,
    ma: ["0:57 1:59 3:61 4:62 5:63 9:65 12:67 16:68 18:67 19:65 21:63 23:63 26:65 28:65 30:67 33:69 35:70 39:70 43:72 46:72 51:74 53:73 57:74 62:73 66:73 70:75 75:75 76:74 80:75 85:79 88:79 89:80 100:81", "#ff0000"]
  },
  { h: 25, title: titles.cross, marks: [43, 57, 71, 72, 93].map(i => [i, "r"]) },
  {
    h: 182, title: titles.force, ticks: 1.5,
    grid: { y: 37.3, step: 26.6, labels: ["-1,250,000", "-1,500,000", "-1,750,000", "-2,000,000", "-2,250,000"] },
    base: 15,
    stems: `0:19 3:21 5:19 7:21 9:22 10:24 12:26 15:31 16:32 17:32 18:38 19:61 20:77 21:89 22:101 23:110 24:117 25:123 27:131 30:138
      34:139 37:141 38:143 40:145 41:144 43:140 45:136 49:136 51:133 53:133 57:134 58:138 60:142 62:144 63:146 65:148 66:147 70:147 73:148 75:151
      78:161 82:169 84:171 85:173 87:175 92:175 93:174 96:173 99:172 100:169`,
    ma: [`0:15 3:16 4:17 5:19 10:21 14:24 16:27 17:28 18:30 19:34 20:39 21:47 22:55 23:63 24:73 25:83 26:94 27:104 28:112 29:118
      30:123 31:127 32:131 34:135 36:138 39:140 41:142 44:142 46:141 48:139 51:136 53:135 57:134 58:134 60:136 62:138 63:139 65:142 67:145 70:147
      73:147 76:149 78:153 79:153 81:158 84:164 87:170 89:172 91:174 98:174 100:173`, "#ff0000"]
  }
];

const shared = ["RSA.L", "RSG", "RSH", "RSW.L", "RTN", "RTN.L", "RTO.L", "RWD.L", "S", "S/SOYB...", "SAB.L", "SAFE.L", "SAI", "SB/SUGAR", "SBRY.L", "SBUX", "SCG", "SCHW", "SCIN.L", "SDR.L", "SDRC.L", "SE", "SEE", "SEMB.L", "SGBS.L", "SGC.L", "SGE.L", "SGRO.L", "SH", "SHB.L", "SHI.L", "SHLD", "SHP.L", "SHW", "SI/SILVER"];
const before = ["REX.L", "RF", "RGU.L", "RHI", "RHT", "RIMM", "RIO.L", "RL", "RMM.L", "RMV.L", "RNK.L", "ROK", "ROP", "ROR.L", "ROST", "RPC.L", "RPS.L", "RR.L", "RRC", "RRD", "RRS.L", "RS TEST"];
const after = ["SIA.L", "SIAL", "SJM", "SKS.L", "SL.L", "SLB", "SLE", "SLM", "SLN.L", "SLV", "SM/SOY...", "SMDR.L", "SMDS.L", "SMIN.L", "SMP.L", "SMT.L", "SMWH.L", "SN.L", "SNA", "SNDK", "SNI", "SO"];

function fillList(id, names) {
  document.getElementById(id).innerHTML = names
    .map(n => `<li${n === "SI/SILVER" ? ' class="selected"' : ""}>${n}</li>`).join("");
}

function fillChart(name, panes, verticals) {
  document.getElementById(name + "-panes").innerHTML = panes.map(p => drawPane(p, verticals)).join("");
}

fillList("weekly-symbols", shared.concat(after));
fillList("daily-symbols", before.concat(shared));

fillChart("weekly", weekly, [33, 98, 163, 233, 293, 358, 428, 493]);
fillChart("daily", daily, [128, 443]);

document.getElementById("weekly-months").innerHTML = cells(
  [13, 33, 58, 78, 98, 123, 143, 163, 188, 208, 233, 253, 273, 293, 318, 338, 358, 383, 403, 428, 448, 468, 493, 513],
  " MAMJJASONDJFMAMJJASONDJF".split(""));
document.getElementById("weekly-years").innerHTML = cells([233, 493], ["10", "11", "12"]);
document.getElementById("daily-months").innerHTML = cells([18, 128, 233, 338, 443], ["", "Sep", "Oct", "Nov", "Dec", "Jan"]);
document.getElementById("daily-years").innerHTML = cells([443], ["11", "12"]);
```
